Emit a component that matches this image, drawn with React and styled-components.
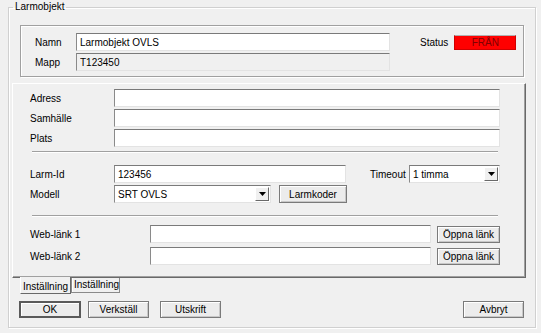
import React from "react";
import styled, { createGlobalStyle } from "styled-components";

const GlobalStyle = createGlobalStyle`
  html, body {
    margin: 0;
    padding: 0;
    background: #f0f0f0;
  }
  body {
    font-family: "Liberation Sans", Arial, sans-serif;
    font-size: 10px;
    color: #000;
  }
`;

const Window = styled.div`
  width: 541px;
  height: 333px;
  box-sizing: border-box;
  padding: 1px 5px 0 8px;
  background: #f0f0f0;
`;

const Group = styled.fieldset`
  margin: 0;
  padding: 0 0 9px;
  min-width: 0;
  border: 1px solid #d0d0d0;
  box-shadow: inset 1px 1px 0 #fff, 1px 1px 0 #fff;
`;

const Legend = styled.legend`
  margin-left: 4px;
  padding: 0 2px;
  line-height: 12px;
  font-size: 10px;
`;

const HeaderPanel = styled.div`
  display: flex;
  align-items: flex-start;
  margin: 12px 11px 0 11px;
  padding: 7px 0 5px 14px;
  border: 1px solid #a0a0a0;
  box-shadow: inset 1px 1px 0 #fff, 1px 1px 0 #fff;
`;

const FieldGrid = styled.div`
  display: grid;
  grid-template-columns: 41px 314px;
  grid-auto-rows: 18px;
  row-gap: 2px;
  align-items: center;
`;

const StatusGroup = styled.div`
  display: flex;
  align-items: center;
  height: 18px;
  margin-left: 30px;
  gap: 6px;
`;

const StatusBadge = styled.div`
  width: 62px;
  height: 15px;
  box-sizing: border-box;
  background: #ff0000;
  border: 1px solid #d00000;
  border-top-color: #b0b0b0;
  color: #800000;
  text-align: center;
  line-height: 13px;
`;

const TabPanel = styled.div`
  margin: 6px 9px 0 3px;
  padding: 5px 0 12px 17px;
  border-top: 1px solid #fff;
  border-left: 1px solid #fff;
  border-right: 1px solid #696969;
  border-bottom: 1px solid #696969;
  box-shadow: inset -1px -1px 0 #a0a0a0;
`;

const Stack = styled.div`
  display: flex;
  flex-direction: column;
  gap: ${(p) => p.$gap || 2}px;
  margin-top: ${(p) => p.$top || 0}px;
`;

const Row = styled.div`
  display: flex;
  align-items: center;
  height: 18px;
`;

const Label = styled.span`
  flex: none;
  width: ${(p) => p.$w}px;
  margin-left: ${(p) => p.$ml || 0}px;
  white-space: nowrap;
`;

const TextBox = styled.input`
  flex: none;
  box-sizing: border-box;
  width: ${(p) => p.$w}px;
  height: 18px;
  margin: 0;
  padding: 0 3px;
  font: inherit;
  color: #000;
  background: ${(p) => (p.$disabled ? "#f0f0f0" : "#fff")};
  border: 1px solid;
  border-color: #7a7a7a #e3e3e3 #e3e3e3 #8a8a8a;
  outline: none;
`;

const Separator = styled.div`
  width: 466px;
  margin: ${(p) => p.$top}px 0 0 2px;
  border-top: 1px solid #a0a0a0;
  border-bottom: 1px solid #fff;
`;

const Combo = styled.div`
  flex: none;
  display: flex;
  align-items: center;
  box-sizing: border-box;
  width: ${(p) => p.$w}px;
  height: 18px;
  margin-left: ${(p) => p.$ml || 0}px;
  padding: 1px 1px 1px 3px;
  background: #fff;
  border: 1px solid;
  border-color: #7a7a7a #e3e3e3 #e3e3e3 #8a8a8a;
`;

const ComboText = styled.span`
  flex: 1;
`;

const ComboArrow = styled.span`
  display: flex;
  align-items: center;
  justify-content: center;
  box-sizing: border-box;
  width: 14px;
  height: 14px;
  background: #f0f0f0;
  border: 1px solid;
  border-color: #fff #696969 #696969 #fff;
`;

const Button = styled.button`
  flex: none;
  box-sizing: border-box;
  width: ${(p) => p.$w}px;
  height: ${(p) => p.$h || 17}px;
  margin: 0 0 0 ${(p) => p.$ml || 0}px;
  padding: 0;
  font: inherit;
  color: #000;
  background: #ececec;
  border: 1px solid #7a7a7a;
  box-shadow: inset 1px 1px 0 #fff, inset -1px -1px 0 #c8c8c8;
  ${(p) =>
    p.$default &&
    `
    border: 2px solid #5a5a5a;
    box-shadow: inset 1px 1px 0 #fff;
  `}
  ${(p) => p.$right && "margin-left: auto;"}
`;

const TabStrip = styled.div`
  display: flex;
  align-items: flex-start;
  height: 16px;
  padding-left: 11px;
  margin-bottom: 7px;
`;

const Tab = styled.div`
  box-sizing: border-box;
  padding: 0 2px;
  white-space: nowrap;
  ${(p) =>
    p.$active
      ? `
    width: 51px;
    height: 17px;
    margin-top: -1px;
    padding-top: 4px;
    background: #f0f0f0;
    border-left: 1px solid #fff;
    border-right: 1px solid #696969;
    border-bottom: 1px solid #696969;
  `
      : `
    width: 49px;
    height: 15px;
    line-height: 13px;
    border: 1px solid #8a8a8a;
    border-top: none;
    box-shadow: inset 1px 0 0 #fff;
  `}
`;

const ButtonRow = styled.div`
  display: flex;
  padding: 0 11px 0 10px;
`;

const Arrow = () => (
  <svg width="7" height="4" viewBox="0 0 7 4">
    <polygon points="0,0 7,0 3.5,4" fill="#000" />
  </svg>
);

export default function App() {
  return (
    <Window>
      <GlobalStyle />
      <Group>
        <Legend>Larmobjekt</Legend>
        <HeaderPanel>
          <FieldGrid>
            <span>Namn</span>
            <TextBox $w={314} defaultValue="Larmobjekt OVLS" />
            <span>Mapp</span>
            <TextBox $w={314} $disabled defaultValue="T123450" readOnly />
          </FieldGrid>
          <StatusGroup>
            <span>Status</span>
            <StatusBadge>FRÅN</StatusBadge>
          </StatusGroup>
        </HeaderPanel>

        <TabPanel>
          <Stack>
            <Row>
              <Label $w={84}>Adress</Label>
              <TextBox $w={386} />
            </Row>
            <Row>
              <Label $w={84}>Samhälle</Label>
              <TextBox $w={386} />
            </Row>
            <Row>
              <Label $w={84}>Plats</Label>
              <TextBox $w={386} />
            </Row>
          </Stack>
          <Separator $top={4} />
          <Stack $top={12}>
            <Row>
              <Label $w={84}>Larm-Id</Label>
              <TextBox $w={232} defaultValue="123456" />
              <Label $w={39} $ml={24}>
                Timeout
              </Label>
              <Combo $w={91}>
                <ComboText>1 timma</ComboText>
                <ComboArrow>
                  <Arrow />
                </ComboArrow>
              </Combo>
            </Row>
            <Row>
              <Label $w={84}>Modell</Label>
              <Combo $w={157}>
                <ComboText>SRT OVLS</ComboText>
                <ComboArrow>
                  <Arrow />
                </ComboArrow>
              </Combo>
              <Button $w={68} $h={18} $ml={8}>
                Larmkoder
              </Button>
            </Row>
          </Stack>
          <Separator $top={12} />
          <Stack $top={8} $gap={4}>
            <Row>
              <Label $w={120}>Web-länk 1</Label>
              <TextBox $w={281} />
              <Button $w={63} $ml={6}>
                Öppna länk
              </Button>
            </Row>
            <Row>
              <Label $w={120}>Web-länk 2</Label>
              <TextBox $w={281} />
              <Button $w={63} $ml={6}>
                Öppna länk
              </Button>
            </Row>
          </Stack>
        </TabPanel>

        <TabStrip>
          <Tab $active>Inställning</Tab>
          <Tab>Inställning</Tab>
        </TabStrip>

        <ButtonRow>
          <Button $w={62} $default>
            OK
          </Button>
          <Button $w={61} $ml={7}>
            Verkställ
          </Button>
          <Button $w={61} $ml={11}>
            Utskrift
          </Button>
          <Button $w={61} $right>
            Avbryt
          </Button>
        </ButtonRow>
      </Group>
    </Window>
  );
}
